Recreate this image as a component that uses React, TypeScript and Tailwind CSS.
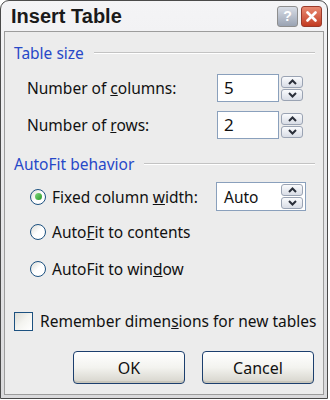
import React from "react";

const font = { fontFamily: '"Noto Sans", "Open Sans", sans-serif' };

function Spinner() {
  return (
    <div className="flex flex-col w-[22px] h-[25px] gap-[1px]">
      {[0, 1].map((i) => (
        <div
          key={i}
          className="flex-1 flex items-center justify-center rounded-[3px] border border-[#9aa3b3] bg-gradient-to-b from-[#fafbfd] to-[#d9dde6]"
        >
          <svg width="9" height="6" viewBox="0 0 9 6">
            {i === 0 ? (
              <path d="M1 5 L4.5 1.5 L8 5" fill="none" stroke="#2a2f3a" strokeWidth="2" />
            ) : (
              <path d="M1 1 L4.5 4.5 L8 1" fill="none" stroke="#2a2f3a" strokeWidth="2" />
            )}
          </svg>
        </div>
      ))}
    </div>
  );
}

function NumberField({ value }: { value: string }) {
  return (
    <div className="flex items-center gap-[2px]">
      <div className="w-[62px] h-[28px] border border-[#8aa0bc] bg-white flex items-center pl-[6px] text-[17px] leading-[20px] text-[#111]">
        {value}
      </div>
      <Spinner />
    </div>
  );
}

function Heading({ children }: { children: React.ReactNode }) {
  return (
    <div className="flex items-center h-[20px] pl-[9px] pr-[8px]">
      <span className="text-[15.5px] leading-[20px] text-[#2748c8] whitespace-nowrap">{children}</span>
      <div className="flex-1 ml-[10px] h-[2px] border-t border-[#c3c3c3] border-b-white border-b" />
    </div>
  );
}

function Radio({ checked, children }: { checked?: boolean; children: React.ReactNode }) {
  return (
    <div className="flex items-center h-[20px] pl-[25px]">
      <div className="w-[16px] h-[16px] rounded-full border border-[#1c5180] bg-gradient-to-br from-[#dcdcd6] via-white to-white flex items-center justify-center">
        {checked && <div className="w-[7px] h-[7px] rounded-full bg-gradient-to-br from-[#7ed67e] to-[#1f9a1f]" />}
      </div>
      <span className="ml-[6px] text-[15.5px] leading-[20px] text-[#111] whitespace-nowrap">{children}</span>
    </div>
  );
}

function Button({ children }: { children: React.ReactNode }) {
  return (
    <div className="w-[112px] h-[33px] rounded-[4px] border border-[#1c3f6e] bg-gradient-to-b from-white via-[#f3f3ef] to-[#d6d4cc] shadow-[inset_0_-2px_0_#c8c6bc] flex items-center justify-center text-[16px] leading-[20px] text-[#111]">
      {children}
    </div>
  );
}

export default function App() {
  return (
    <div className="w-[330px] h-[400px] bg-white" style={font}>
      <div className="w-[328px] h-[399px] rounded-t-[9px] border border-[#4a4a4a] bg-gradient-to-b from-[#f4f4f6] to-[#dadadc] flex flex-col">
        <div className="h-[30px] flex items-center pl-[10px] pr-[5px]">
          <span
            className="text-[20px] leading-[24px] font-bold text-[#1a1a1a]"
            style={{ fontFamily: '"Liberation Sans", Arial, sans-serif' }}
          >
            Insert Table
          </span>
          <div className="ml-auto flex gap-[3px]">
            <div
              className="w-[21px] h-[21px] rounded-[3px] border border-[#8e8e8e] bg-gradient-to-b from-[#d8dde6] to-[#9aa3b3] flex items-center justify-center text-white font-bold text-[14px]"
              style={{ fontFamily: '"Liberation Sans", Arial, sans-serif' }}
            >
              ?
            </div>
            <div className="w-[21px] h-[21px] rounded-[3px] border border-[#9a3a2a] bg-gradient-to-b from-[#e88a72] to-[#c2391f] flex items-center justify-center">
              <svg width="11" height="11" viewBox="0 0 11 11">
                <path d="M1.5 1.5 L9.5 9.5 M9.5 1.5 L1.5 9.5" stroke="white" strokeWidth="2.6" strokeLinecap="round" />
              </svg>
            </div>
          </div>
        </div>
        <div className="flex-1 mx-[3px] mb-[3px] border border-[#9c9c9c] bg-[#ececec] flex flex-col pt-[11px]">
          <Heading>Table size</Heading>
          <div className="flex items-center justify-between pl-[22px] pr-[20px] mt-[11px] h-[28px]">
            <span className="text-[15.5px] leading-[20px] text-[#111]">
              Number of <u>c</u>olumns:
            </span>
            <NumberField value="5" />
          </div>
          <div className="flex items-center justify-between pl-[22px] pr-[20px] mt-[9px] h-[28px]">
            <span className="text-[15.5px] leading-[20px] text-[#111]">
              Number of <u>r</u>ows:
            </span>
            <NumberField value="2" />
          </div>
          <div className="mt-[15px]">
            <Heading>AutoFit behavior</Heading>
          </div>
          <div className="flex items-center justify-between pr-[17px] mt-[8px] h-[29px]">
            <Radio checked>
              Fixed column <u>w</u>idth:
            </Radio>
            <div className="w-[90px] h-[29px] border border-[#8aa0bc] bg-white flex items-center pl-[7px] pr-[2px] text-[15.5px] leading-[20px] text-[#111]">
              <span>Auto</span>
              <div className="ml-auto">
                <Spinner />
              </div>
            </div>
          </div>
          <div className="mt-[11px]">
            <Radio>
              Auto<u>F</u>it to contents
            </Radio>
          </div>
          <div className="mt-[17px]">
            <Radio>
              AutoFit to win<u>d</u>ow
            </Radio>
          </div>
          <div className="flex items-center pl-[9px] mt-[32px] h-[20px]">
            <div className="w-[19px] h-[19px] border border-[#1c5180] bg-gradient-to-br from-[#dcdcd6] via-[#f4f4f0] to-white" />
            <span className="ml-[7px] text-[15.5px] leading-[20px] text-[#111] whitespace-nowrap">
              Remember dimen<u>s</u>ions for new tables
            </span>
          </div>
          <div className="flex justify-end gap-[17px] pr-[9px] mt-[20px]">
            <Button>OK</Button>
            <Button>Cancel</Button>
          </div>
        </div>
      </div>
    </div>
  );
}
